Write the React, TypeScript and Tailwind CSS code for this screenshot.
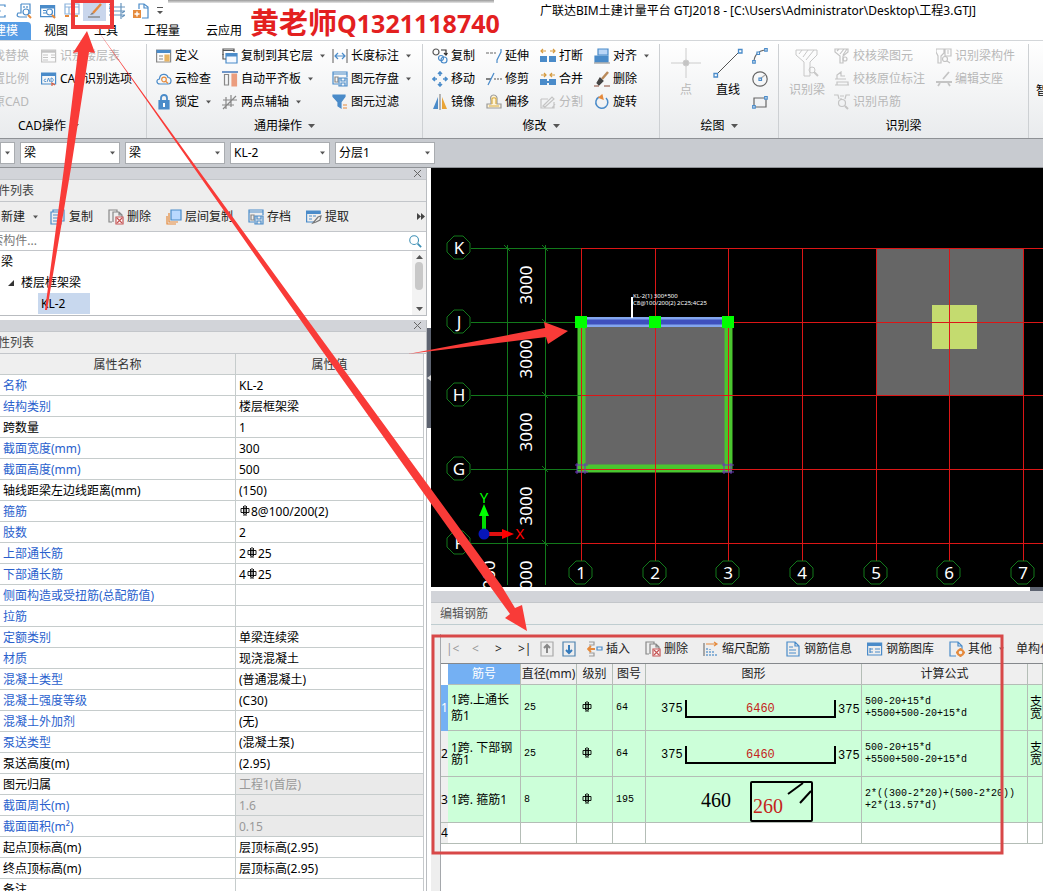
import React, { ReactNode } from "react";

const BLUE = "#4a8bc9";
const ORANGE = "#e58a3c";
const GRAY = "#c4c4c4";

function Svg({ children, size = 16, className = "" }: { children: ReactNode; size?: number; className?: string }) {
  return (
    <svg aria-hidden="true" width={size} height={size} viewBox="0 0 16 16" fill="none" stroke={BLUE} strokeWidth="1.2" className={`shrink-0 ${className}`}>
      {children}
    </svg>
  );
}

function Caret({ className = "w-[7px]" }: { className?: string }) {
  return (
    <svg aria-hidden="true" height="4" viewBox="0 0 7 4" className={`shrink-0 ${className}`}>
      <path d="M0 0h7L3.500 4z" fill="#555" />
    </svg>
  );
}

const icons: Record<string, ReactNode> = {
  sigma: <Svg><path d="M14 4V2H4l5 6-5 6h10v-2" /></Svg>,
  ruler: <Svg><path d="M5 1h9v10M5 1v9H2c-2 3 0 4 2 4h7M8 3v2M11 3v2M8 7v2" /><circle cx="10" cy="9" r="3" fill="#fff" /><path d="m12 12 3 3" stroke={ORANGE} strokeWidth="2" /></Svg>,
  find: <Svg><path d="M.6 2.600h14v11H.6z" /><path d="M.6 4h14" strokeWidth="3" /><path d="M3 7.500h3M3 10h3" /><circle cx="9.500" cy="9" r="3" fill="#fff" /><path d="m12 12 3 3" stroke={ORANGE} strokeWidth="2" /></Svg>,
  report: <Svg><path d="M1 1h14v10H1zM1 4h14M5 4v7M10 4v7" stroke="#8cb4dd" /><path d="M1 13h4M9 13h5" stroke={ORANGE} strokeWidth="2" /></Svg>,
  pencil: <Svg><path d="M1 14h12" stroke="#777" /><path d="m6 10 8-9" stroke={ORANGE} strokeWidth="2.400" /><path d="m3 12 2-2.500 2 1.500z" fill="#777" stroke="none" /></Svg>,
  grid: <Svg><path d="M4 0v16M12 0v16M0 4h16M0 8h16M0 12h16M0 2l3-2M0 6l3-2M13 10l3-2M13 14l3-2" stroke="#6794bd" /></Svg>,
  docplus: <Svg><path d="M6 6V1h5l4 3v11H9" /><path d="M11 1v4h4" /><path d="M0 7h8v8H0z" fill={ORANGE} stroke="none" /><path d="M4 8.500v5M1.500 11h5" stroke="#fff" strokeWidth="1.400" /></Svg>,
  table: <Svg><path d="M.6 2h14v12H.6zM2 7h5M2 9.500h5M2 12h5M10 7h4M10 9.500h4" stroke={GRAY} /><path d="M.6 3.500h14" stroke={GRAY} strokeWidth="2.500" /></Svg>,
  cad: <Svg><path d="M.6 2h14v11H.6z" /><path d="M.6 3.500h14" strokeWidth="3" /><path d="M5 8.500c-2-1.500-3 3 0 2M6 11l1.500-4L9 11M10 7v4c3 0 3-4 0-4" strokeWidth=".9" /><path d="M11 15v-3l3 2" stroke="#dd5d3d" /></Svg>,
  define: <Svg><path d="M.6 2h14v12H.6zM3 8h4M3 11h4" stroke="#888" /><path d="M.6 3.500h14" strokeWidth="3" /><path d="M9 7h4v6H9z" fill="#e8b564" stroke="#e8b564" /></Svg>,
  cloud: <Svg><path d="M4 13C0 13 0 8 3.500 8 3.500 2 11 2 12 6.500c4 0 4 6.500 0 6.500z" /><circle cx="8" cy="8.500" r="2.300" stroke={ORANGE} /><path d="m10 10.500 2 2" stroke={ORANGE} /></Svg>,
  lock: <Svg><path d="M5 7V4c0-4 6-4 6 0v3" strokeWidth="1.800" /><path d="M3 6.500h10V15H3z" fill={BLUE} /><path d="M8 9v4" stroke="#fff" strokeWidth="2" /></Svg>,
  layers: <Svg><path d="M1 7V1h11v3M1 2.500h11" stroke="#555" /><path d="M4 5.500h11V15H4z" fill="#f5f9ff" /><path d="M4 7h11" strokeWidth="3" /><path d="M1 6v5h3" stroke="#555" /></Svg>,
  level: <Svg><path d="M0 1h16" stroke="#4376b8" strokeWidth="1.500" /><path d="M2.500 3.500h4V14h-4z" stroke="#888" /><path d="M10 3h4.500v12H10z" fill="#eb9d7e" stroke="#eb9d7e" /></Svg>,
  axis: <Svg><path d="M4 3v12M9 1v12M1 6h14M0 11h12M1 15 14 2" stroke="#888" /></Svg>,
  length: <Svg><path d="M1 1v14M15 1v14" stroke="#777" /><path d="M3 8h10M6 5 3 8l3 3M10 5l3 3-3 3" /></Svg>,
  save: <Svg><path d="M15 6V1H1v12h5M1 3h14" /><path d="M3 6h3v5H3z" stroke="#888" /><path d="M7 7h8v8H7zM9 7v3h4V7M9 15v-3h4v3" /></Svg>,
  filter: <Svg><path d="M1 1h12v1.500L9 8v6l-3-2V8L1 2.500z" fill={BLUE} /><path d="M11 11h4M11 14h4" stroke={ORANGE} /></Svg>,
  copy2: <Svg><circle cx="4" cy="4" r="3" stroke="#555" /><path d="M9 2h5v4M12 5l2 2 1.500-2" stroke="#333" /><circle cx="9" cy="10" r="2.500" /><circle cx="12" cy="12" r="3" /></Svg>,
  move: <Svg><path d="M8 1v4M8 11v4M1 8h4M11 8h4M6 3l2-2 2 2M6 13l2 2 2-2M3 6 1 8l2 2M13 6l2 2-2 2" strokeWidth="1.600" /></Svg>,
  mirror: <Svg><path d="M6 3v12H1z" fill={BLUE} stroke="none" /><path d="M10 3v12h5z" fill="#e9a436" stroke="none" /><path d="M8 0v16" stroke="#888" /></Svg>,
  extend: <Svg><path d="M0 5h10" stroke="#666" strokeDasharray="3 1" /><path d="M15 1v3l-4 8v3" /></Svg>,
  trim: <Svg><path d="M0 8h5" stroke="#333" /><path d="M8 8h8" stroke="#555" strokeDasharray="2 1" /><path d="m2 14 6-12" /></Svg>,
  offset: <Svg><path d="M1 14v-4h4V7c-3-8 8-8 6 0v3h4v4z" fill="#fff3d5" stroke="#999" /><path d="M3 12h10M6 10V6c-1-3 5-3 4 0v4" stroke="#d9ad44" /></Svg>,
  break: <Svg><path d="M0 8h7v6H0zM9 8h7v6H9z" fill={BLUE} stroke="none" /><path d="M6 3H1M3 1 1 3l2 2M10 3h5M13 1l2 2-2 2" stroke="#d59a3f" /></Svg>,
  merge: <Svg><path d="M0 8h7v6H0zM9 8h7v6H9zM7 10h2v2H7z" fill={BLUE} stroke="none" /><path d="M1 4h5M4 2l2 2-2 2M15 4h-5M12 2l-2 2 2 2" stroke="#d59a3f" /></Svg>,
  split: <Svg><path d="M1 5h7M14 8v6H1V5M3 12l9-9 2 2-9 8zM12 14l3-4" stroke={GRAY} /></Svg>,
  align: <Svg><path d="M4 1h10v6H4z" fill="#b9d5f6" /><path d="M1 8h13v6H1z" fill={BLUE} /><path d="M0 15h16" stroke="#999" /></Svg>,
  brush: <Svg><path d="m8 8 6-7" stroke="#b98a5a" strokeWidth="2.500" /><path d="m3 12 3-5 3 3-4 4z" fill="#444" stroke="#444" /><path d="M0 15h5M10 15h6" stroke="#884936" /></Svg>,
  rotate: <Svg><path d="M5 3a6 6 0 1 0 7 1" strokeWidth="1.500" /><path d="m8 1-3 2.500 4 1.500z" fill={ORANGE} stroke={ORANGE} /></Svg>,
  check: <Svg><path d="M1 1h13v3L9 8v7H6V8L1 4zM3 3l2-2M6 6l4-5M9 7l4-6" stroke={GRAY} /><circle cx="11" cy="11" r="2" stroke={GRAY} /></Svg>,
  label: <Svg><path d="M3 8V4l4-3v4h4M1 8h11M3 14v-3h11v3zM1 14h14" stroke={GRAY} /></Svg>,
  hang: <Svg><path d="M0 1h4l1 4M16 1h-4l-1 4M6 2h4M7 4v2" stroke={GRAY} /><circle cx="8" cy="9" r="3.500" stroke={GRAY} /><path d="m11 12 3 3" stroke={GRAY} strokeWidth="2" /></Svg>,
  component: <Svg><path d="M0 1h8v4l-3 3v7H2V8L0 4zM9 1h6v7H9zM11 3h2M11 5h2" stroke={GRAY} /><circle cx="9" cy="11" r="2.500" stroke={GRAY} /><path d="m11 13 3 2" stroke={GRAY} /></Svg>,
  support: <Svg><path d="m7 8 6-7M0 11h16M4 12l-2 3M12 12l2 3" stroke={GRAY} strokeWidth="1.800" /></Svg>,
  doccopy: <Svg><path d="M3 3V1h11v11h-2M1 3h10v12H1zM3 6h6M3 9h6M3 12h6" /></Svg>,
  docdel: <Svg><path d="M4 13H1V1h8v2M5 13V3h6l3 3v2M11 3v3h3" stroke="#888" /><path d="M8 8h7v7H8z" fill="#fff" stroke="#c55454" /><path d="m9 9 5 5M14 9l-5 5" stroke="#c55454" /></Svg>,
  between: <Svg><path d="M5 1h10v10H5z" fill="#b9d8ff" /><path d="M3 4v9h9M1 7v8h9" stroke={ORANGE} /></Svg>,
  extract: <Svg><path d="M14 5V2H.6v11H8M3 7h3M3 10h3M7 7h3" /><path d="M.6 3.500h14" strokeWidth="3" /><path d="m7 14 5-6 3-1-1 4-4 2z" fill="#eee" stroke="#777" /></Svg>,
  up: <Svg><path d="M2 1h12v14H2z" stroke="#aaa" /><path d="M8 12V4M5 7l3-3 3 3" stroke="#888" strokeWidth="2" /></Svg>,
  down: <Svg><path d="M2 1h12v14H2z" stroke="#4f83af" /><path d="M8 4v8M5 9l3 3 3-3" stroke="#357bbc" strokeWidth="2" /></Svg>,
  insert: <Svg><path d="M2 1h5v3H2M2 15h5v-3H2" stroke="#999" /><path d="M10 6h5v3h-5z" /><path d="M8 8H1M4 5 1 8l3 3" stroke={ORANGE} strokeWidth="1.800" /></Svg>,
  scale: <Svg><path d="M1 2v13" stroke="#777" /><path d="M4 15V6M7 15V8M10 15v-5M13 15v-3" strokeDasharray="2 1" /><path d="M3 3h11M11 1l3 2-3 2" stroke={ORANGE} /></Svg>,
  info: <Svg><path d="M2 1h8l4 4v10H2zM10 1v4h4M4 6h4M4 9h7M4 12h7" /></Svg>,
  library: <Svg><path d="M.6 2h14v12H.6zM3 7v5M3 8h3M8 8h5M3 11h3M8 11h5" /><path d="M.6 3.500h14" strokeWidth="3" /></Svg>,
  other: <Svg><path d="M7 15H1V1h8l4 4v3M9 1v4h4" /><circle cx="11.500" cy="11.500" r="2.800" stroke={ORANGE} strokeWidth="2" /><path d="M11.500 7v2M11.500 14v2M7 11.500h2M14 11.500h2" stroke={ORANGE} strokeWidth="2" /></Svg>,
  search: <Svg size={14}><circle cx="7" cy="7" r="5" stroke="#3c8fb5" /><path d="m11 11 4 4" stroke="#3c8fb5" strokeWidth="2" /></Svg>,
};

type Tool = { icon?: string; text: string; caret?: boolean; off?: boolean };

function ToolColumn({ tools, className = "" }: { tools: Tool[]; className?: string }) {
  return (
    <div className={`flex shrink-0 flex-col ${className}`}>
      {tools.map((t) => (
        <button key={t.text} type="button" className={`flex h-[23px] items-center whitespace-nowrap ${t.off ? "text-[#b8b8b8]" : ""}`}>
          {t.icon && <span className="mr-[3px]">{icons[t.icon]}</span>}
          {t.text}
          {t.caret && <Caret className="ml-[7px] w-[5px]" />}
        </button>
      ))}
    </div>
  );
}

function Group({ label, caret, className = "", labelClass = "justify-center", children }: { label: string; caret?: boolean; className?: string; labelClass?: string; children: ReactNode }) {
  return (
    <section className={`flex shrink-0 flex-col overflow-hidden border-r border-[#cdd0d3] ${className}`}>
      <div className="flex h-[69px]">{children}</div>
      <div className={`flex h-[25px] items-center pt-px ${labelClass}`}>
        {label}
        {caret && <Caret className="ml-[6px] w-[7px]" />}
      </div>
    </section>
  );
}

function Ribbon() {
  return (
    <div className="flex h-[98px] shrink-0 overflow-hidden border-b border-[#8e9195] bg-gradient-to-b from-white to-[#e9ebed] pt-[3px]">
      <Group label="CAD操作" caret className="w-[147px]" labelClass="pl-[18px]">
        <div className="flex w-[29px] shrink-0 flex-col items-end overflow-hidden">
          <ToolColumn className="items-end" tools={[{ text: "查找替换", off: true }, { text: "设置比例", off: true }, { text: "还原CAD", off: true }]} />
        </div>
        <ToolColumn className="ml-3" tools={[{ icon: "table", text: "识别楼层表", off: true }, { icon: "cad", text: "CAD识别选项" }]} />
      </Group>
      <Group label="通用操作" caret className="w-[276px]">
        <ToolColumn className="ml-[9px] w-[66px]" tools={[{ icon: "define", text: "定义" }, { icon: "cloud", text: "云检查" }, { icon: "lock", text: "锁定", caret: true }]} />
        <ToolColumn className="w-[110px]" tools={[{ icon: "layers", text: "复制到其它层", caret: true }, { icon: "level", text: "自动平齐板", caret: true }, { icon: "axis", text: "两点辅轴", caret: true }]} />
        <ToolColumn tools={[{ icon: "length", text: "长度标注", caret: true }, { icon: "save", text: "图元存盘", caret: true }, { icon: "filter", text: "图元过滤" }]} />
      </Group>
      <Group label="修改" caret className="w-[237px]">
        <ToolColumn className="ml-[9px] w-[54px]" tools={[{ icon: "copy2", text: "复制" }, { icon: "move", text: "移动" }, { icon: "mirror", text: "镜像" }]} />
        <ToolColumn className="w-[54px]" tools={[{ icon: "extend", text: "延伸" }, { icon: "trim", text: "修剪" }, { icon: "offset", text: "偏移" }]} />
        <ToolColumn className="w-[54px]" tools={[{ icon: "break", text: "打断" }, { icon: "merge", text: "合并" }, { icon: "split", text: "分割", off: true }]} />
        <ToolColumn tools={[{ icon: "align", text: "对齐", caret: true }, { icon: "brush", text: "删除" }, { icon: "rotate", text: "旋转" }]} />
      </Group>
      <Group label="绘图" caret className="w-[119px]">
        <button type="button" className="ml-[10px] flex w-8 flex-col items-center pt-1 text-[#b8b8b8]">
          <svg aria-hidden="true" width="30" height="30" viewBox="0 0 30 30" stroke="#ccc">
            <path d="M15 0v12M15 18v12M0 15h12M18 15h12" />
            <circle cx="15" cy="15" r="3" fill="#c4c4c4" />
          </svg>
          <span className="mt-1">点</span>
        </button>
        <button type="button" className="ml-[10px] flex w-8 flex-col items-center pt-1">
          <svg aria-hidden="true" width="30" height="30" viewBox="0 0 30 30" fill="#fff" stroke={BLUE}>
            <path d="M3 27 27 3" stroke="#555" />
            <path d="M1 25.500h3.500V29H1zM25.500 1.500H29V5h-3.500z" strokeWidth="1.300" />
          </svg>
          <span className="mt-1">直线</span>
        </button>
        <div className="ml-2 flex flex-col">
          <button type="button" aria-label="弧线" className="flex h-[23px] items-center">
            <Svg><path d="M2 14C2 7 7 2 14 2" stroke="#666" /><path d="M.7 12.700h2.500v2.500H.7zM5 4h2.500v2.500H5zM12.700.7h2.500v2.500h-2.500z" fill="#fff" /></Svg>
          </button>
          <button type="button" aria-label="圆" className="flex h-[23px] items-center">
            <Svg><circle cx="8" cy="8" r="7.200" stroke="#666" /><path d="m8 8 5-4" stroke="#aaa" /><path d="M7 7h2.500v2.500H7z" /></Svg>
          </button>
          <button type="button" aria-label="矩形" className="flex h-[23px] items-center">
            <Svg><path d="M2 4h12v9H2z" stroke="#666" /><path d="M.7 11.700h2.500v2.500H.7zM12.700 2.700h2.500v2.500h-2.500z" fill="#fff" /></Svg>
          </button>
        </div>
      </Group>
      <Group label="识别梁" className="w-[250px]">
        <button type="button" className="ml-[6px] flex w-11 flex-col items-center pt-1 text-[#b8b8b8]">
          <svg aria-hidden="true" width="26" height="30" viewBox="0 0 26 30" fill="none" stroke="#c8c8c8">
            <path d="M2 2h21v5l-7 7v14h-6V14L2 7zM5 6l3-4M9 9l5-7M12 12l8-10" />
            <circle cx="18" cy="22" r="3" />
            <path d="m20 24 4 4" strokeWidth="2" />
          </svg>
          <span className="mt-1">识别梁</span>
        </button>
        <ToolColumn className="ml-[5px] w-[102px]" tools={[{ icon: "check", text: "校核梁图元", off: true }, { icon: "label", text: "校核原位标注", off: true }, { icon: "hang", text: "识别吊筋", off: true }]} />
        <ToolColumn tools={[{ icon: "component", text: "识别梁构件", off: true }, { icon: "support", text: "编辑支座", off: true }]} />
      </Group>
      <button type="button" className="flex h-[69px] items-end whitespace-nowrap pb-[14px] pl-[7px]">智能布置</button>
    </div>
  );
}

function Combo({ label, value, className }: { label: string; value: string; className: string }) {
  return (
    <div className={`relative h-[22px] shrink-0 ${className}`}>
      <select aria-label={label} className="h-full w-full appearance-none border border-[#a9acb0] bg-white pl-[3px] leading-5 outline-none">
        <option>{value}</option>
      </select>
      <Caret className="pointer-events-none absolute top-[9px] right-[5px] w-[5px]" />
    </div>
  );
}

function Header() {
  const quick = ["ruler", "find", "report"];
  return (
    <header className="relative flex h-10 shrink-0 flex-col bg-white">
      <div className="flex h-[22px] items-center">
        <div className="flex w-[540px] shrink-0 items-center overflow-hidden">
          <div className="flex w-[7px] justify-end overflow-hidden"><button type="button" aria-label="汇总">{icons.sigma}</button></div>
          <div className="ml-[9px] flex gap-2">
            {quick.map((q) => <button key={q} type="button" aria-label={q}>{icons[q]}</button>)}
          </div>
          <button type="button" aria-label="编辑钢筋" className="ml-[3px] flex h-5 w-[23px] items-center justify-center bg-[#c9d6ec]">{icons.pencil}</button>
          <button type="button" aria-label="轴网" className="ml-[3px]">{icons.grid}</button>
          <button type="button" aria-label="新建文件" className="ml-2">{icons.docplus}</button>
          <svg aria-hidden="true" width="6" height="8" viewBox="0 0 6 8" className="ml-2"><path d="M0 0h6v1H0zM0 4h6L3 7z" fill="#555" /></svg>
        </div>
        <h1 className="truncate">广联达BIM土建计量平台 GTJ2018 - [C:\Users\Administrator\Desktop\工程3.GTJ]</h1>
      </div>
      <nav className="flex h-[18px] items-center">
        <a href="#model" className="flex h-[18px] w-[31px] items-center justify-end overflow-hidden rounded-tr-sm bg-[#569de5] pr-[13px] whitespace-nowrap text-white">建模</a>
        <a href="#view" className="ml-[13px]">视图</a>
        <a href="#tools" className="ml-[26px]">工具</a>
        <a href="#quantity" className="ml-[26px]">工程量</a>
        <a href="#cloud" className="ml-[26px]">云应用</a>
      </nav>
      <div className="absolute top-0 left-[168px] h-[3px] w-[326px] bg-gradient-to-b from-[#9a9a9a] to-[#e6e6e6]" />
      <div className="absolute top-[7px] left-[250px] flex h-8 items-center font-bold whitespace-nowrap text-[#e3201f]">
        <span className="text-[29px]">黄老师</span>
        <span className="text-[25px]">Q1321118740</span>
      </div>
    </header>
  );
}

function PanelTitle({ title }: { title: ReactNode }) {
  return (
    <>
      <div className="flex h-3 shrink-0 items-center justify-end border-b border-[#c3c6ca] bg-[#d2d4d9] pr-[5px]">
        <button type="button" aria-label="关闭">
          <svg aria-hidden="true" width="7" height="7" viewBox="0 0 7 7" stroke="#666"><path d="m0 0 7 7M7 0 0 7" /></svg>
        </button>
      </div>
      <div className="flex h-[22px] shrink-0 items-center border-b border-[#c3c6ca] bg-[#eee] text-[#444]">{title}</div>
    </>
  );
}

function ClippedTitle({ text }: { text: string }) {
  return <h2 className="flex w-[34px] justify-end overflow-hidden whitespace-nowrap">{text}</h2>;
}

function ComponentList() {
  const tools = [
    { icon: "doccopy", text: "复制" },
    { icon: "docdel", text: "删除" },
    { icon: "between", text: "层间复制" },
    { icon: "save", text: "存档" },
    { icon: "extract", text: "提取" },
  ];
  return (
    <section className="flex h-[148px] shrink-0 flex-col border-r border-b border-[#b9bcc0]">
      <PanelTitle title={<ClippedTitle text="构件列表" />} />
      <div className="flex h-[30px] shrink-0 items-center border-b border-[#c3c6ca] bg-[#eee] text-[#222]">
        <button type="button" className="flex items-center pl-px">新建<Caret className="ml-2 w-[5px]" /></button>
        <div className="ml-3 flex gap-[15px]">
          {tools.map((t) => (
            <button key={t.text} type="button" className="flex items-center gap-[3px] whitespace-nowrap">{icons[t.icon]}{t.text}</button>
          ))}
        </div>
        <svg aria-label="更多" className="mr-px ml-auto" width="8" height="7" viewBox="0 0 8 7"><path d="m0 0 4 3.500L0 7zM4 0l4 3.500L4 7z" fill="#444" /></svg>
      </div>
      <div className="flex h-[19px] shrink-0 items-center border-b border-[#c3c6ca] bg-white pr-1">
        <label className="flex w-[37px] flex-none justify-end overflow-hidden whitespace-nowrap text-[#777]" htmlFor="component-search">搜索构件...</label>
        <input id="component-search" type="text" className="min-w-0 flex-1 bg-transparent outline-none" />
        {icons.search}
      </div>
      <div className="flex min-h-0 flex-1 bg-white">
        <ul className="flex-1">
          <li className="flex h-[21px] items-center pl-px">梁</li>
          <li className="flex h-[21px] items-center pl-2">
            <svg aria-hidden="true" width="6" height="6" viewBox="0 0 6 6"><path d="M6 0v6H0z" fill="#333" /></svg>
            <span className="ml-[7px]">楼层框架梁</span>
          </li>
          <li className="ml-[38px] flex h-[21px] w-[52px] items-center bg-[#c8d8ee] pl-[3px]">KL-2</li>
        </ul>
        <div className="flex w-[14px] flex-col items-center bg-[#f3f3f3] py-1">
          <Caret className="w-[7px] rotate-180" />
          <div className="mt-[3px] h-7 w-2 rounded-full bg-[#c8c8c8]" />
          <Caret className="mt-auto w-[7px]" />
        </div>
      </div>
    </section>
  );
}

function Rebar() {
  return (
    <svg role="img" aria-label="HRB400" className="mx-px inline-block align-[0px]" width="10" height="11" viewBox="0 0 10 11" fill="none" stroke="currentColor">
      <path d="M1 3.500h8v4H1zM3.500 1v8M6.500 1v8M5 0v10M3 10h4" strokeWidth=".9" />
    </svg>
  );
}

type Prop = [name: string, value: ReactNode, tone?: "black"];
const props: Prop[] = [
  ["名称", "KL-2"],
  ["结构类别", "楼层框架梁"],
  ["跨数量", "1", "black"],
  ["截面宽度(mm)", "300"],
  ["截面高度(mm)", "500"],
  ["轴线距梁左边线距离(mm)", "(150)", "black"],
  ["箍筋", <><Rebar />8@100/200(2)</>],
  ["肢数", "2"],
  ["上部通长筋", <>2<Rebar />25</>],
  ["下部通长筋", <>4<Rebar />25</>],
  ["侧面构造或受扭筋(总配筋值)", ""],
  ["拉筋", ""],
  ["定额类别", "单梁连续梁"],
  ["材质", "现浇混凝土"],
  ["混凝土类型", "(普通混凝土)"],
  ["混凝土强度等级", "(C30)"],
  ["混凝土外加剂", "(无)"],
  ["泵送类型", "(混凝土泵)"],
  ["泵送高度(m)", "(2.95)", "black"],
  ["图元归属", "工程1(首层)", "black"],
  ["截面周长(m)", "1.6"],
  ["截面面积(m²)", "0.15"],
  ["起点顶标高(m)", "层顶标高(2.95)", "black"],
  ["终点顶标高(m)", "层顶标高(2.95)", "black"],
  ["备注", "", "black"],
];
const locked = ["图元归属", "截面周长(m)", "截面面积(m²)"];

function Properties() {
  return (
    <section className="mt-1 flex min-h-0 flex-1 flex-col overflow-hidden border-r border-[#b9bcc0] bg-white">
      <PanelTitle title={<ClippedTitle text="属性列表" />} />
      <div className="min-h-0 flex-1 overflow-hidden pr-[2px]">
        <table className="w-full table-fixed border-separate border-spacing-0 border-r border-[#c6c9cc]">
          <colgroup><col className="w-[236px]" /><col /></colgroup>
          <thead>
            <tr className="h-[21px] bg-[#efefef] text-[#333]">
              <th className="border-r border-b border-[#c6cccc] p-0 pt-[2px] font-normal">属性名称</th>
              <th className="border-b border-[#c6cccc] p-0 pt-[2px] font-normal">属性值</th>
            </tr>
          </thead>
          <tbody>
            {props.map(([name, value, tone]) => (
              <tr key={name} className="h-[21px]">
                <td className={`border-r border-b border-[#c6cccc] p-0 pt-[2px] pl-[3px] ${tone === "black" ? "" : "text-[#2a5fcd]"}`}>{name}</td>
                <td className={`border-b border-[#c6cccc] p-0 pt-[2px] pl-[3px] ${locked.includes(name) ? "bg-[#eaeaea] text-[#999]" : ""}`}>{value}</td>
              </tr>
            ))}
          </tbody>
        </table>
      </div>
    </section>
  );
}

const xs = [150, 224, 297, 371, 445, 518, 592];
const ys: [string, number][] = [["K", 80], ["J", 154], ["H", 227], ["G", 301], ["F", 375]];

function Bubble({ x, y, text }: { x: number; y: number; text: string }) {
  return (
    <g>
      <path d={`M${x - 5} ${y - 12}h9l7 7v9l-7 7h-9l-7-7v-9z`} fill="none" stroke="#12791b" />
      <text x={x} y={y + 6} textAnchor="middle" fontSize="17" fill="#fff">{text}</text>
    </g>
  );
}

function Canvas() {
  return (
    <div className="min-h-0 flex-1 overflow-hidden bg-black">
      <svg role="img" aria-label="梁平面图" className="block h-full w-full">
        <path d="M150 154h147v147H150zM445 80h147v147H445z" fill="#666" />
        <path d="M501 137h45v44h-45z" fill="#c4db6f" />
        <path d="M150.500 154v147M297.500 154v147M146 300.500h155" stroke="#4ac62f" strokeWidth="8" fill="none" />
        <path d="M76.500 77v340M114.500 77v340" stroke="#12791b" />
        {ys.map(([t, y]) => (
          <g key={t}>
            <path d={`M40 ${y + 0.5}H150M111 ${y - 3}l6 6`} stroke="#12791b" />
            <Bubble x={28} y={y} text={t} />
          </g>
        ))}
        <path d="M73 77l6 6" stroke="#12791b" />
        {ys.map(([t, y]) => (
          <rect key={t} x="150" y={y} width="100%" height="1" fill="#dc1616" />
        ))}
        {xs.map((x, i) => (
          <g key={x}>
            <rect x={x} y="80" width="1" height="313" fill="#dc1616" />
            <Bubble x={x} y={405} text={String(i + 1)} />
          </g>
        ))}
        {[117, 191, 264, 338, 412].map((y) => (
          <text key={y} transform={`translate(101 ${y}) rotate(-90)`} textAnchor="middle" fontSize="17" fill="#fff">3000</text>
        ))}
        <text transform="translate(64 407) rotate(-90)" textAnchor="middle" fontSize="17" fill="#fff">000</text>
        <path d="M150 154h147" stroke="#83a6ee" strokeWidth="10" />
        <path d="M150 154h147" stroke="#3e50be" strokeWidth="5" />
        <path d="M144 148h12v12h-12zM218 148h12v12h-12zM291 148h12v12h-12z" fill="#0f0" />
        <path d="M201 129v21" stroke="#fff" strokeWidth="2" />
        <text x="202" y="130" fontSize="6" fill="#fff">KL-2(1) 300*500</text>
        <text x="202" y="137" fontSize="6" fill="#fff">C8@100/200(2) 2C25;4C25</text>
        <path d="M146 295v11M154 295v11M144 297h13M144 304h13M293 295v11M300 295v11M291 297h12M291 304h12" stroke="#6d31bb" />
        <path d="M53 363v-16" stroke="#0d0" strokeWidth="4" />
        <path d="m48 348 5-12 5 12z" fill="#0f0" />
        <path d="M56 366h16" stroke="#e01010" strokeWidth="4" />
        <path d="m71 361 12 5-12 5z" fill="#f00" />
        <circle cx="53" cy="366" r="5.500" fill="#0716ba" />
        <text x="53" y="335" textAnchor="middle" fontSize="15" fill="#0f0">Y</text>
        <text x="89" y="371" textAnchor="middle" fontSize="15" fill="#f00">X</text>
      </svg>
    </div>
  );
}

function BarShape() {
  return (
    <svg role="img" aria-label="375 6460 375" width="215" height="44" viewBox="0 0 215 44" className="block font-['Liberation_Mono',monospace]">
      <path d="M40 14v17h149V14" fill="none" stroke="#000" strokeWidth="2" />
      <text x="15" y="26" fontSize="12">375</text>
      <text x="100" y="26" fontSize="12" fill="#c4251b">6460</text>
      <text x="192" y="27" fontSize="12">375</text>
    </svg>
  );
}

function StirrupShape() {
  return (
    <svg role="img" aria-label="460 260" width="215" height="44" viewBox="0 0 215 44" className="block font-['Liberation_Serif',serif]">
      <rect x="105" y="4" width="61" height="39" rx="1" fill="none" stroke="#000" strokeWidth="2" />
      <path d="m142 16 15-11M154 25l11-12" stroke="#000" strokeWidth="2" />
      <text x="55" y="29" fontSize="20">460</text>
      <text x="107" y="35" fontSize="20" fill="#c4251b">260</text>
    </svg>
  );
}

const rebarRows: { name: ReactNode; d: string; no: string; shape: ReactNode; formula: string[]; tail: string[] }[] = [
  { name: <span className="block leading-4">1跨.上通长<br />筋1</span>, d: "25", no: "64", shape: <BarShape />, formula: ["500-20+15*d", "+5500+500-20+15*d"], tail: ["支", "宽"] },
  { name: <>1跨. 下部钢<br />筋1</>, d: "25", no: "64", shape: <BarShape />, formula: ["500-20+15*d", "+5500+500-20+15*d"], tail: ["支", "宽"] },
  { name: "1跨. 箍筋1", d: "8", no: "195", shape: <StirrupShape />, formula: ["2*((300-2*20)+(500-2*20))", "+2*(13.57*d)"], tail: ["", ""] },
];

function RebarEditor() {
  const cell = "border-r border-b border-[#b4bdb6] p-0 ";
  const mono = "font-['Liberation_Mono','Noto_Sans_CJK_SC',monospace] text-[10px] leading-3 ";
  const tools: { icon: string; text: string }[] = [
    { icon: "insert", text: "插入" },
    { icon: "docdel", text: "删除" },
    { icon: "scale", text: "缩尺配筋" },
    { icon: "info", text: "钢筋信息" },
    { icon: "library", text: "钢筋图库" },
    { icon: "other", text: "其他" },
  ];
  return (
    <section className="flex h-[300px] shrink-0 flex-col overflow-hidden bg-[#eee]">
      <div className="h-3 shrink-0 border-b border-[#c3c6ca] bg-[#d2d4d9]" />
      <h2 className="flex h-[22px] shrink-0 items-center border-b border-[#bfcdd0] pl-[9px] text-[#555]">编辑钢筋</h2>
      <div className="mt-[9px] ml-[9px] flex min-h-0 flex-1 flex-col border-l border-[#a5a8ac]">
        <div className="flex h-[30px] shrink-0 items-center overflow-hidden border-b border-[#85888c] pl-[5px] whitespace-nowrap text-[#222]">
          <button type="button" className="w-[26px] shrink-0 text-left text-[#999]">|&lt;</button>
          <button type="button" className="w-[23px] shrink-0 text-left text-[#999]">&lt;</button>
          <button type="button" className="w-[23px] shrink-0 text-left">&gt;</button>
          <button type="button" className="w-[21px] shrink-0 text-left">&gt;|</button>
          <button type="button" aria-label="上移" className="shrink-0">{icons.up}</button>
          <button type="button" aria-label="下移" className="ml-[6px] shrink-0">{icons.down}</button>
          <div className="ml-[10px] flex shrink-0 gap-[15px]">
            {tools.map((t) => (
              <button key={t.text} type="button" className="flex items-center gap-[3px]">{icons[t.icon]}{t.text}</button>
            ))}
          </div>
          <Caret className="ml-[7px] w-[5px]" />
          <button type="button" className="ml-3 shrink-0">单构件输入</button>
        </div>
        <div className="min-h-0 flex-1 overflow-hidden bg-white">
          <table className="w-full table-fixed border-separate border-spacing-0">
            <colgroup>
              <col className="w-[7px]" /><col className="w-[73px]" /><col className="w-[56px]" /><col className="w-[36px]" /><col className="w-[33px]" /><col className="w-[216px]" /><col className="w-[166px]" /><col />
            </colgroup>
            <thead>
              <tr className="h-[21px] bg-[#efefef] whitespace-nowrap text-[#222]">
                <th aria-label="序号" className="bg-white p-0" />
                <th className="border-r border-b border-[#b4bdb6] bg-[#74b0f3] p-0 font-normal text-white">筋号</th>
                {["直径(mm)", "级别", "图号", "图形", "计算公式", ""].map((h) => <th key={h} className={cell + "font-normal"}>{h}</th>)}
              </tr>
            </thead>
            <tbody>
              {rebarRows.map((r, i) => (
                <tr key={i} className="h-[46px] bg-[#ccffd9]">
                  <td className={i === 0 ? "bg-[#74b0f3] p-0 text-white" : "border-b border-[#b4bdb6] bg-[#efefef] p-0"}>{i + 1}</td>
                  <td className={cell + "pl-[3px] leading-3 whitespace-nowrap"}>{r.name}</td>
                  <td className={cell + mono + "pl-[3px]"}>{r.d}</td>
                  <td className={cell + "pl-[4px]"}><Rebar /></td>
                  <td className={cell + mono + "pl-[3px]"}>{r.no}</td>
                  <td className={cell}>{r.shape}</td>
                  <td className={cell + mono + "pl-[3px] whitespace-nowrap"}>{r.formula[0]}<br />{r.formula[1]}</td>
                  <td className={cell + "pl-[2px] leading-3"}>{r.tail[0]}<br />{r.tail[1]}</td>
                </tr>
              ))}
              <tr className="h-[21px]">
                <td className="border-b border-[#b4bdb6] bg-[#efefef] p-0">4</td>
                {[1, 2, 3, 4, 5, 6, 7].map((n) => <td key={n} className={cell} />)}
              </tr>
            </tbody>
          </table>
        </div>
      </div>
    </section>
  );
}

function Annotations() {
  return (
    <svg aria-hidden="true" className="pointer-events-none absolute inset-0 h-full w-full" fill="#f93b38">
      <path d="M73 1h39v26H73z" fill="none" stroke="#ee3a3a" strokeWidth="4" />
      <path d="M433 636h569v217H433z" fill="none" stroke="#d84848" strokeWidth="3" />
      <path d="M45 310 64 168 78 52l-5 1 14-22 8 22-6-1L71 168 47 310z" />
      <path d="M93 24 197 168 326 345 501 585l14 23 7-3 5 26-22-13 5-4-21-29L318 345 194 168z" />
      <path d="m408 354 137-26-1-6 24 9-20 13-2-7-138 17z" />
    </svg>
  );
}

export default function App() {
  return (
    <div className="relative flex h-screen flex-col overflow-hidden bg-white font-['Noto_Sans','Noto_Sans_CJK_SC',sans-serif] text-[12px] leading-4 text-black">
      <Header />
      <div className="h-px shrink-0 bg-[#d3d6d9]" />
      <Ribbon />
      <div className="flex h-[29px] shrink-0 items-center gap-[5px] overflow-hidden border-b border-[#8e9195] bg-[#c8cbd0]">
        <Combo label="楼层" value="" className="w-[15px]" />
        <Combo label="构件类别" value="梁" className="w-[100px]" />
        <Combo label="构件类型" value="梁" className="w-[100px]" />
        <Combo label="构件" value="KL-2" className="w-[100px]" />
        <Combo label="分层" value="分层1" className="w-[100px]" />
      </div>
      <main className="flex min-h-0 flex-1">
        <div className="flex w-[427px] shrink-0 flex-col">
          <ComponentList />
          <Properties />
        </div>
        <div className="w-1 shrink-0 pt-40">
          <div className="flex h-[100px] items-center bg-[#5d6370]">
            <svg aria-hidden="true" width="4" height="6" viewBox="0 0 4 6"><path d="M4 0v6L0 3z" fill="#ddd" /></svg>
          </div>
        </div>
        <div className="flex min-w-0 flex-1 flex-col">
          <Canvas />
          <div className="flex h-1 shrink-0 justify-end"><div className="w-[13px] bg-[#5d6370]" /></div>
          <RebarEditor />
        </div>
      </main>
      <Annotations />
    </div>
  );
}
